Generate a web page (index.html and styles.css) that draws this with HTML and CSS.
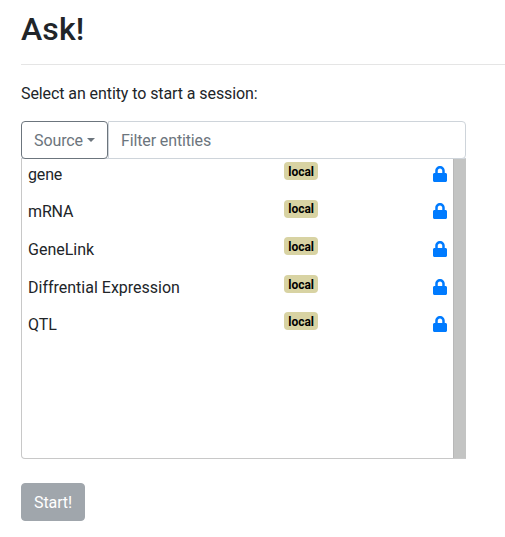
FILE: index.html
```html
<!DOCTYPE html>
<html lang="en">
<head>
<meta charset="utf-8">
<title>Ask!</title>
<link rel="stylesheet" href="styles.css">
</head>
<body>
<svg class="sprite" aria-hidden="true"><symbol id="lock" viewBox="0 0 448 512"><path d="M400 224h-24v-72C376 68.200 307.800 0 224 0S72 68.200 72 152v72H48c-26.500 0-48 21.500-48 48v192c0 26.500 21.500 48 48 48h352c26.500 0 48-21.500 48-48V272c0-26.500-21.500-48-48-48zm-104 0H152v-72c0-39.700 32.300-72 72-72s72 32.300 72 72v72z"/></symbol></svg>
<main class="page">
  <h2>Ask!</h2>
  <hr>
  <p>Select an entity to start a session:</p>
  <div class="filter">
    <button class="source">Source<span class="caret"></span></button>
    <input class="search" type="text" placeholder="Filter entities">
  </div>
  <div class="entities">
    <ul>
      <li><span>gene</span><b class="badge">local</b><svg class="lock"><use href="#lock"/></svg></li>
      <li><span>mRNA</span><b class="badge">local</b><svg class="lock"><use href="#lock"/></svg></li>
      <li><span>GeneLink</span><b class="badge">local</b><svg class="lock"><use href="#lock"/></svg></li>
      <li><span>Diffrential Expression</span><b class="badge">local</b><svg class="lock"><use href="#lock"/></svg></li>
      <li><span>QTL</span><b class="badge">local</b><svg class="lock"><use href="#lock"/></svg></li>
    </ul>
    <div class="track"></div>
  </div>
  <button class="start" disabled>Start!</button>
</main>
</body>
</html>
```
FILE: styles.css
```css
* { box-sizing: border-box; }
body {
  margin: 0;
  background: #fff;
  color: #212529;
  font: 16px/1.5 Roboto, sans-serif;
  overflow: hidden;
}
.sprite { display: none; }
.page { padding: 10px 0 0 21px; }
h2 { margin: 0; font-size: 32px; font-weight: 500; line-height: 38px; letter-spacing: .1px; }
hr { margin: 16px 0; border: 0; border-top: 1px solid rgba(0, 0, 0, .1); }
p { margin: 17px 0 15px; letter-spacing: -.085px; }
.filter { display: flex; width: 445px; height: 38px; }
.source {
  width: 87px;
  padding: 8px 12px 6px;
  border: 1px solid #6c757d;
  border-radius: 4px;
  background: #fff;
  color: #6c757d;
  font: inherit;
  line-height: 22px;
  letter-spacing: -.1px;
  white-space: nowrap;
}
.caret {
  display: inline-block;
  margin-left: 4px;
  vertical-align: 4px;
  border: 4.8px solid transparent;
  border-top-color: #6c757d;
  border-bottom: 0;
}
.search {
  flex: 1;
  min-width: 0;
  padding: 8px 12px 6px;
  border: 1px solid #ced4da;
  border-radius: 0 4px 4px 0;
  font: inherit;
  line-height: 22px;
  letter-spacing: -.13px;
}
.search::placeholder { color: #6c757d; opacity: 1; }
.entities {
  display: flex;
  width: 445px;
  height: 301px;
  margin-top: -1px;
  border: 1px solid #c8c8c8;
  border-top-color: #ced4da;
  border-radius: 0 0 0 4px;
}
ul { flex: 1; margin: 0; padding: 0 6px; list-style: none; }
li {
  display: grid;
  grid-template-columns: 256px 1fr auto;
  justify-items: start;
  align-items: start;
  height: 37.6px;
  padding-top: 3px;
  color: #212529;
}
li span { margin-top: .8px; }
li:nth-child(-n+2) span { letter-spacing: -.15px; }
.badge {
  padding: 3.8px 4.3px 2.2px;
  border-radius: 4px;
  background: #d8d3a3;
  color: #000;
  font-size: 12px;
  line-height: 12px;
  letter-spacing: -.02px;
}
.lock { width: 14px; height: 16px; margin-top: 3.8px; fill: #007bff; }
.track { width: 12px; background: #c3c4c3; box-shadow: inset 1px 0 #b8b8b8, 1px 0 #c3c4c3; }
.start {
  display: block;
  width: 64px;
  height: 38px;
  margin-top: 24px;
  padding: 8px 12px 6px;
  border: 1px solid #a0a6ac;
  border-radius: 4px;
  background: #a0a6ac;
  color: #fff;
  font: inherit;
  line-height: 22px;
  letter-spacing: -.1px;
}
```
